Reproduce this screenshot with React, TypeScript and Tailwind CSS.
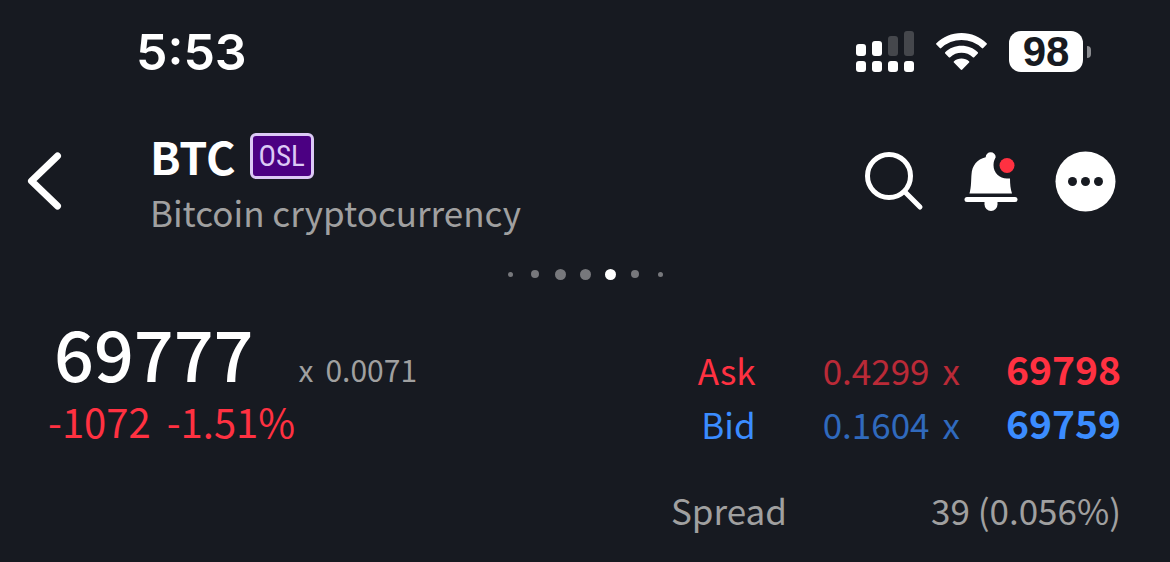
import type { ReactNode } from "react";

type Side = "ask" | "bid";

interface Quote {
  side: Side;
  label: string;
  size: string;
  price: string;
}

const quotes: Quote[] = [
  { side: "ask", label: "Ask", size: "0.4299", price: "69798" },
  { side: "bid", label: "Bid", size: "0.1604", price: "69759" },
];

const pages = ["xs", "sm", "md", "md", "active", "sm", "xs"];

function getDotClass(kind: string): string {
  switch (kind) {
    case "active":
      return "size-[11px] bg-white";
    case "md":
      return "size-[11px] bg-[#77787c]";
    case "sm":
      return "size-2 bg-[#77787c]";
    default:
      return "size-[5px] bg-[#77787c]";
  }
}

function SignalIcon() {
  return (
    <svg width="58" height="41" viewBox="0 0 58 41" fill="#fff" aria-hidden="true">
      <rect x="0" y="13" width="10" height="12" rx="3" />
      <rect x="16" y="10" width="10" height="15" rx="3" />
      <rect x="32" y="5" width="10" height="20" rx="3" fill="#45474c" />
      <rect x="48" y="0" width="10" height="25" rx="3" fill="#45474c" />
      <rect x="0" y="30" width="10" height="11" rx="3" />
      <rect x="16" y="30" width="10" height="11" rx="3" />
      <rect x="32" y="30" width="10" height="11" rx="3" />
      <rect x="48" y="30" width="10" height="11" rx="3" />
    </svg>
  );
}

function WifiIcon() {
  return (
    <svg width="51" height="38" viewBox="0 0 51 38" fill="#fff" aria-hidden="true">
      <path d="M25.5 0C35.3 0 44.1 3.9 50.6 10.2Q51.3 10.9 50.6 11.6L47.2 15.1Q46.5 15.8 45.8 15.1A29.4 29.4 0 0 0 5.2 15.1Q4.5 15.8 3.8 15.1L.4 11.6Q-.3 10.9.4 10.2C6.9 3.9 15.7 0 25.5 0Z" />
      <path d="M25.5 12.8C31.8 12.8 37.5 15.2 41.8 19.2Q42.5 19.9 41.8 20.6L38.2 24.2Q37.5 24.9 36.8 24.2A16.9 16.9 0 0 0 14.2 24.2Q13.5 24.9 12.8 24.2L9.2 20.6Q8.5 19.9 9.2 19.2C13.5 15.2 19.2 12.8 25.5 12.8Z" />
      <path d="M25.5 25.5C28.4 25.5 31 26.5 33 28.2Q33.8 28.9 33.1 29.6L26.3 36.5Q25.5 37.3 24.7 36.5L17.9 29.6Q17.2 28.9 18 28.2C20 26.5 22.6 25.5 25.5 25.5Z" />
    </svg>
  );
}

function StatusBar() {
  return (
    <div className="flex h-[103px] items-center justify-between pr-[79px] pl-[136px]">
      <span className="font-['Inter',sans-serif] text-[50px] leading-[60px] font-semibold">5:53</span>
      <div className="flex items-center">
        <SignalIcon />
        <div className="ml-[22px]">
          <WifiIcon />
        </div>
        <div className="ml-[22px] flex items-center gap-1">
          <span className="flex h-[41px] w-[74px] items-center justify-center rounded-xl bg-white font-['Liberation_Sans',sans-serif] text-[42px] leading-[41px] font-bold text-[#171a21]">
            98
          </span>
          <span className="h-3 w-1 rounded-r-full bg-[#8b8c90]" />
        </div>
      </div>
    </div>
  );
}

function IconButton({ label, children }: { label: string; children: ReactNode }) {
  return (
    <button type="button" aria-label={label} className="block shrink-0">
      {children}
    </button>
  );
}

function Header() {
  return (
    <header className="flex items-center pr-[54px] pl-[27px]">
      <IconButton label="Back">
        <svg width="36" height="58" viewBox="0 0 36 58" fill="none" stroke="#fff" strokeWidth="7" strokeLinecap="round" strokeLinejoin="round">
          <path d="M30.500 4 4.500 29 30.500 54" />
        </svg>
      </IconButton>

      <div className="ml-[87px] flex-1">
        <div className="flex items-center gap-[14px]">
          <h1 className="text-[45px] leading-[61px] font-bold">BTC</h1>
          <span className="rounded-md border-3 border-[#dcc9f5] bg-[#4b0082] px-[6px] font-['Roboto_Condensed','Open_Sans_Condensed','Noto_Sans_CJK_SC',sans-serif] text-[29px] leading-10 text-[#dcc9f5]">
            OSL
          </span>
        </div>
        <p className="text-[35px] leading-[51px] text-[#a0a0a0]">Bitcoin cryptocurrency</p>
      </div>

      <div className="flex items-center">
        <IconButton label="Search">
          <svg width="60" height="60" viewBox="0 0 60 60" fill="none" stroke="#fff" strokeWidth="5" strokeLinecap="round">
            <circle cx="25" cy="25" r="21.500" />
            <path d="M41 41 56 56" />
          </svg>
        </IconButton>
        <div className="ml-10">
          <IconButton label="Alerts">
            <svg width="54" height="62" viewBox="0 0 54 62" fill="#fff">
              <path d="M5.500 43.500C7.500 36 7 30 7.500 24.500C8 15.500 13 9.500 21.700 7.300A5 5 0 1 1 31.700 7.300C31 9 29.500 11 29.500 15C29.500 23 35.500 28.500 43 28.500H46C46 34 46.500 39 48 43.500Z" />
              <rect x="0.500" y="47" width="53" height="5" rx="2.500" />
              <path d="M20.500 52H33.500V54.500A6.500 6.500 0 0 1 20.500 54.500Z" />
              <circle cx="43" cy="15.500" r="7.500" fill="#ff3141" />
            </svg>
          </IconButton>
        </div>
        <div className="ml-[37px]">
          <IconButton label="More">
            <svg width="61" height="61" viewBox="0 0 61 61" fill="#fff">
              <circle cx="30.500" cy="30.500" r="30" />
              <g fill="#171a21">
                <circle cx="17.500" cy="30.500" r="4.500" />
                <circle cx="30.500" cy="30.500" r="4.500" />
                <circle cx="43.500" cy="30.500" r="4.500" />
              </g>
            </svg>
          </IconButton>
        </div>
      </div>
    </header>
  );
}

function PageDots() {
  return (
    <div className="mt-[29px] flex h-4 justify-center">
      {pages.map((kind, i) => (
        <span key={i} className="flex w-[25px] items-center justify-center">
          <span className={`rounded-full ${getDotClass(kind)}`} />
        </span>
      ))}
    </div>
  );
}

function LastPrice() {
  return (
    <section aria-label="Last price">
      <div className="flex items-baseline pl-[6px]">
        <span className="text-[70px] leading-20 font-medium">69777</span>
        <span className="ml-[45px] flex gap-3 text-[30px] leading-10 text-[#a0a0a0]">
          <span>x</span>
          <span>0.0071</span>
        </span>
      </div>
      <div className="mt-1 flex gap-4 text-[40px] leading-[50px] text-[#ff3141]">
        <span>-1072</span>
        <span>-1.51%</span>
      </div>
    </section>
  );
}

function QuoteBook() {
  return (
    <section aria-label="Quotes" className="mt-[30px]">
      <table className="ml-auto">
        <tbody>
          {quotes.map((q) => (
            <tr
              key={q.side}
              className={`text-right align-baseline leading-[52px] ${q.side === "ask" ? "text-[#ff3141]" : "text-[#3b8cff]"}`}
            >
              <th scope="row" className="text-right text-[35px] font-normal">
                {q.label}
              </th>
              <td className="pl-[67px] text-[35px] opacity-70">{q.size}</td>
              <td className="pl-[13px] text-[35px] opacity-70">x</td>
              <td className="pl-[46px] text-[39px] font-bold">{q.price}</td>
            </tr>
          ))}
        </tbody>
      </table>
      <dl className="mt-[34px] flex justify-between text-[35px] leading-[52px] text-[#a0a0a0]">
        <dt>Spread</dt>
        <dd className="ml-36">39 (0.056%)</dd>
      </dl>
    </section>
  );
}

export default function App() {
  return (
    <div className="min-h-screen w-full bg-[#171a21] font-['Noto_Sans_CJK_SC',sans-serif] text-white">
      <StatusBar />
      <div className="pt-[22px]">
        <Header />
      </div>
      <PageDots />
      <main className="mt-[30px] flex items-start justify-between pr-[49px] pl-12">
        <LastPrice />
        <QuoteBook />
      </main>
    </div>
  );
}
